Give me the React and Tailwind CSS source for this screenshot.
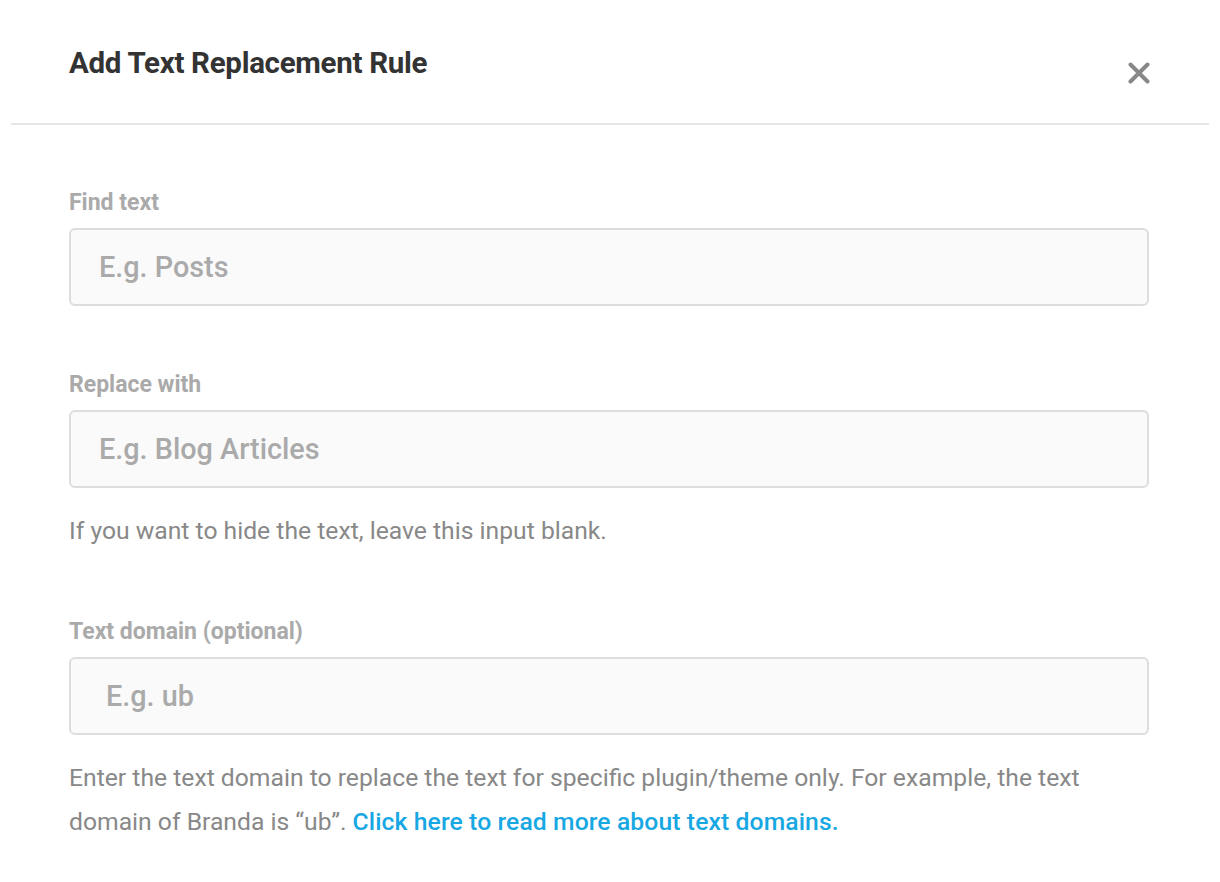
import React from 'react'

function Field({ label, placeholder, inputPad = 'pl-[28px]', children }) {
  return (
    <div>
      <label className="block mt-[2px] text-[23px] leading-[28px] font-bold text-[#aaaaaa] mb-[11px]">{label}</label>
      <input
        type="text"
        placeholder={placeholder}
        className={`block w-full h-[78px] rounded-[6px] border-2 border-[#dddddd] bg-[#fafafa] ${inputPad} pr-[28px] text-[28.8px] font-medium text-[#333333] placeholder:text-[#aaaaaa] outline-none`}
      />
      {children}
    </div>
  )
}

export default function App() {
  return (
    <div className="min-h-[882px] w-[1220px] bg-white" style={{ fontFamily: 'Roboto, "Liberation Sans", sans-serif' }}>
      <div className="mx-[11px] h-[125px] border-b-2 border-[#e6e6e6] pl-[58px] pr-[59px] flex justify-between items-start">
        <h2 className="mt-[45px] text-[29.5px] leading-[36px] font-bold text-[#333333] tracking-[-0.3px]">Add Text Replacement Rule</h2>
        <button type="button" className="mt-[62px] w-[22px] h-[22px] text-[#888888]" aria-label="Close">
          <svg viewBox="0 0 22 22" width="22" height="22">
            <path d="M2.5 2.5 L19.5 19.5 M19.5 2.5 L2.5 19.5" stroke="currentColor" strokeWidth="4" strokeLinecap="round" />
          </svg>
        </button>
      </div>

      <div className="pl-[69px] pr-[71px] pt-[62px] flex flex-col gap-[63px]">
        <Field label="Find text" placeholder="E.g. Posts" />
        <Field label="Replace with" placeholder="E.g. Blog Articles">
          <p className="mt-[21px] text-[24.7px] leading-[44px] text-[#888888]">If you want to hide the text, leave this input blank.</p>
        </Field>
        <Field label="Text domain (optional)" placeholder="E.g. ub" inputPad="pl-[35px]">
          <p className="mt-[21px] text-[24.7px] leading-[44px] text-[#888888]">
            Enter the text domain to replace the text for specific plugin/theme only. For example, the text domain of Branda is “ub”.{' '}
            <a href="#" className="font-medium text-[#17a8e3] tracking-[0.1px]">Click here to read more about text domains.</a>
          </p>
        </Field>
      </div>
    </div>
  )
}
